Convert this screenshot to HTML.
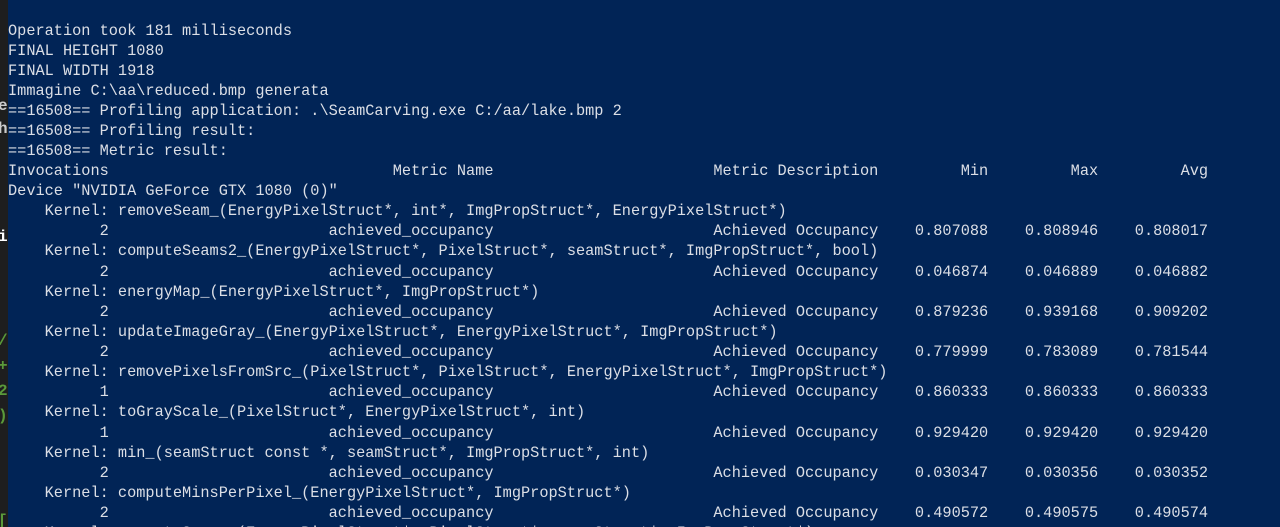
<!DOCTYPE html>
<html><head><meta charset="utf-8"><style>
html,body{margin:0;padding:0;width:1280px;height:527px;overflow:hidden;background:#012456;position:relative;}
#strip{position:absolute;left:0;top:0;width:8px;height:527px;background:#1e1e1e;overflow:hidden;}
#strip span{position:absolute;left:-2px;font:16px "Liberation Mono",monospace;line-height:20px;font-weight:bold;}
.l{position:absolute;left:8px;white-space:pre;font-family:"Liberation Mono",monospace;font-size:15.28px;line-height:20px;height:20px;color:#dcdfe6;}
</style></head><body>
<div id="strip">
<span style="top:96px;color:#ccc">e</span>
<span style="top:119px;color:#ccc">h</span>
<span style="top:227px;color:#fff">i</span>
<span style="top:331px;color:#5a9a3a">/</span>
<span style="top:356px;color:#5a9a3a">+</span>
<span style="top:381px;color:#5a9a3a">2</span>
<span style="top:406px;color:#5a9a3a">)</span>
<span style="top:511px;color:#5a9a3a">[</span>
</div>
<div class="l" style="top:21px">Operation took 181 milliseconds</div>
<div class="l" style="top:41px">FINAL HEIGHT 1080</div>
<div class="l" style="top:61px">FINAL WIDTH 1918</div>
<div class="l" style="top:81px">Immagine C:\aa\reduced.bmp generata</div>
<div class="l" style="top:101px">==16508== Profiling application: .\SeamCarving.exe C:/aa/lake.bmp 2</div>
<div class="l" style="top:121px">==16508== Profiling result:</div>
<div class="l" style="top:141px">==16508== Metric result:</div>
<div class="l" style="top:161px">Invocations                               Metric Name                        Metric Description         Min         Max         Avg</div>
<div class="l" style="top:181px">Device "NVIDIA GeForce GTX 1080 (0)"</div>
<div class="l" style="top:201px">    Kernel: removeSeam_(EnergyPixelStruct*, int*, ImgPropStruct*, EnergyPixelStruct*)</div>
<div class="l" style="top:221px">          2                        achieved_occupancy                        Achieved Occupancy    0.807088    0.808946    0.808017</div>
<div class="l" style="top:241px">    Kernel: computeSeams2_(EnergyPixelStruct*, PixelStruct*, seamStruct*, ImgPropStruct*, bool)</div>
<div class="l" style="top:262px">          2                        achieved_occupancy                        Achieved Occupancy    0.046874    0.046889    0.046882</div>
<div class="l" style="top:282px">    Kernel: energyMap_(EnergyPixelStruct*, ImgPropStruct*)</div>
<div class="l" style="top:302px">          2                        achieved_occupancy                        Achieved Occupancy    0.879236    0.939168    0.909202</div>
<div class="l" style="top:322px">    Kernel: updateImageGray_(EnergyPixelStruct*, EnergyPixelStruct*, ImgPropStruct*)</div>
<div class="l" style="top:342px">          2                        achieved_occupancy                        Achieved Occupancy    0.779999    0.783089    0.781544</div>
<div class="l" style="top:362px">    Kernel: removePixelsFromSrc_(PixelStruct*, PixelStruct*, EnergyPixelStruct*, ImgPropStruct*)</div>
<div class="l" style="top:382px">          1                        achieved_occupancy                        Achieved Occupancy    0.860333    0.860333    0.860333</div>
<div class="l" style="top:402px">    Kernel: toGrayScale_(PixelStruct*, EnergyPixelStruct*, int)</div>
<div class="l" style="top:423px">          1                        achieved_occupancy                        Achieved Occupancy    0.929420    0.929420    0.929420</div>
<div class="l" style="top:443px">    Kernel: min_(seamStruct const *, seamStruct*, ImgPropStruct*, int)</div>
<div class="l" style="top:463px">          2                        achieved_occupancy                        Achieved Occupancy    0.030347    0.030356    0.030352</div>
<div class="l" style="top:483px">    Kernel: computeMinsPerPixel_(EnergyPixelStruct*, ImgPropStruct*)</div>
<div class="l" style="top:503px">          2                        achieved_occupancy                        Achieved Occupancy    0.490572    0.490575    0.490574</div>
<div class="l" style="top:523px">    Kernel: computeSeams_(EnergyPixelStruct*, PixelStruct*, seamStruct*, ImgPropStruct*)</div>
</body></html>
